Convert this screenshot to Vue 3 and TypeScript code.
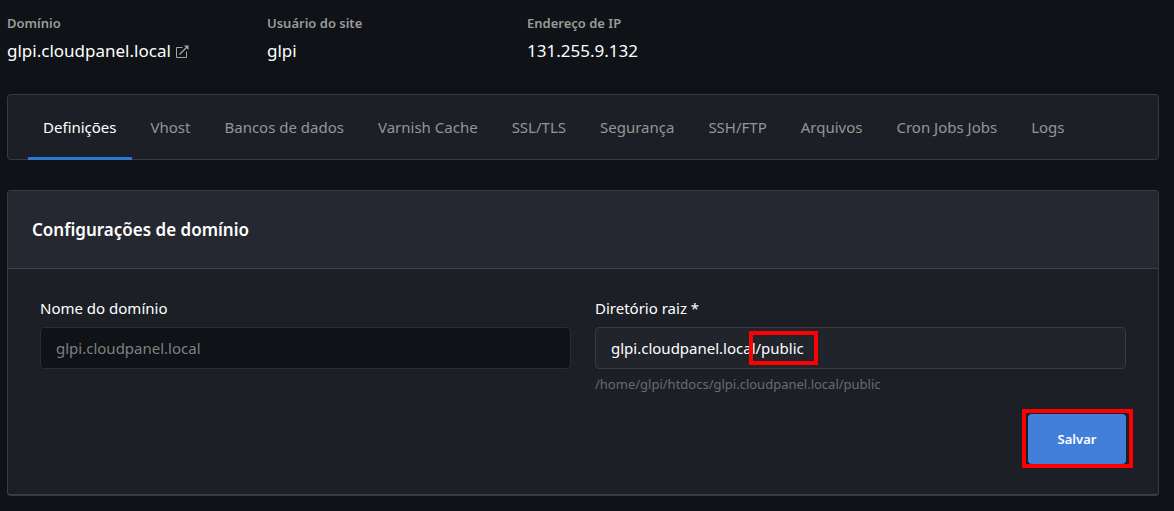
<script setup lang="ts">
import { ref } from 'vue'

interface Tab {
  label: string
  href: string
}

const tabs: Tab[] = [
  { label: 'Definições', href: '#settings' },
  { label: 'Vhost', href: '#vhost' },
  { label: 'Bancos de dados', href: '#databases' },
  { label: 'Varnish Cache', href: '#varnish-cache' },
  { label: 'SSL/TLS', href: '#ssl-tls' },
  { label: 'Segurança', href: '#security' },
  { label: 'SSH/FTP', href: '#ssh-ftp' },
  { label: 'Arquivos', href: '#files' },
  { label: 'Cron Jobs Jobs', href: '#cron-jobs' },
  { label: 'Logs', href: '#logs' },
]

const activeTab = ref('#settings')
const domainName = ref('glpi.cloudpanel.local')
const rootDirectory = ref('glpi.cloudpanel.local/public')
</script>

<template>
  <main class="page">
    <dl class="summary">
      <div class="summary-item">
        <dt>Domínio</dt>
        <dd>
          glpi.cloudpanel.local
          <a class="external" href="#open-site" aria-label="Abrir site">
            <svg viewBox="0 0 13 13" width="13" height="13" fill="none" stroke="currentColor" aria-hidden="true">
              <path d="M6.5 2.5h-6v10h10v-6" />
              <path d="M3.5 9.5l8-8" stroke-width="1.2" />
              <path d="M8 .5h4.500v4.500z" fill="currentColor" stroke="none" />
            </svg>
          </a>
        </dd>
      </div>
      <div class="summary-item">
        <dt>Usuário do site</dt>
        <dd>glpi</dd>
      </div>
      <div class="summary-item">
        <dt>Endereço de IP</dt>
        <dd>131.255.9.132</dd>
      </div>
    </dl>

    <nav class="tabs">
      <a
        v-for="tab in tabs"
        :key="tab.href"
        :href="tab.href"
        class="tab"
        :class="{ active: tab.href === activeTab }"
        @click="activeTab = tab.href"
      >{{ tab.label }}</a>
    </nav>

    <section class="card">
      <header class="card-header">
        <h2>Configurações de domínio</h2>
      </header>
      <form class="card-body" @submit.prevent>
        <div class="fields">
          <div class="field">
            <label for="domain-name">Nome do domínio</label>
            <input id="domain-name" v-model="domainName" type="text" disabled />
          </div>
          <div class="field">
            <label for="root-directory">Diretório raiz *</label>
            <div class="control">
              <input id="root-directory" v-model="rootDirectory" type="text" required />
              <span class="mark mark-path"></span>
            </div>
            <small>/home/glpi/htdocs/{{ rootDirectory }}</small>
          </div>
        </div>
        <div class="actions">
          <div class="control">
            <button type="submit">Salvar</button>
            <span class="mark mark-save"></span>
          </div>
        </div>
      </form>
    </section>
  </main>
</template>

<style>
body {
  margin: 0;
  background: #0f1216;
}
</style>

<style scoped>
.page {
  padding: 11px 15px 15px 7px;
  font-family: "Segoe UI", "Noto Sans", "Open Sans", sans-serif;
  font-size: 15px;
  line-height: 24px;
  color: #fff;
}

.page *,
.page *::before {
  box-sizing: border-box;
}

.summary {
  display: flex;
  margin: 0 0 27px;
}

.summary-item {
  width: 260px;
}

dt {
  font-size: 13px;
  font-weight: 600;
  line-height: 24px;
  color: #9b9b9b;
}

dd {
  display: flex;
  align-items: center;
  gap: 5px;
  margin: 0;
  font-size: 17px;
  line-height: 32px;
}

.external {
  padding-top: 1px;
  color: #a5a5a5;
}

.external svg {
  display: block;
}

.tabs {
  display: flex;
  gap: 4px;
  height: 66px;
  padding: 0 20px;
  border: 1px solid #383b44;
  border-radius: 4px;
  background: #1d1f27;
}

.tab {
  padding: 20px 15px 0;
  margin-bottom: -1px;
  border-bottom: 3px solid transparent;
  color: #959595;
  text-decoration: none;
  white-space: nowrap;
}

.tab.active {
  border-bottom-color: #2f77d6;
  color: #fff;
}

.card {
  margin-top: 30px;
  border: 1px solid #383b44;
  border-bottom-width: 2px;
  border-radius: 4px;
  background: #1d1f27;
}

.card-header {
  padding: 27px 24px 26px;
  border-bottom: 1px solid #3d4049;
  border-radius: 3px 3px 0 0;
  background: #252830;
}

h2 {
  margin: 0;
  font-size: 17px;
  font-weight: 600;
  line-height: 24px;
}

.card-body {
  padding: 27px 32px 30px;
}

.fields {
  display: grid;
  grid-template-columns: 1fr 1fr;
  gap: 24px;
}

.field {
  display: flex;
  flex-direction: column;
}

label {
  margin-bottom: 7px;
}

.control {
  position: relative;
}

input {
  display: block;
  width: 100%;
  height: 42px;
  padding: 0 15px;
  border: 1px solid #383b44;
  border-radius: 4px;
  background: #22242c;
  color: #fff;
  font: inherit;
}

input:disabled {
  border-color: #2a2d35;
  background: #0f1216;
  color: #808080;
}

small {
  margin-top: 4px;
  font-size: 13px;
  line-height: 22px;
  color: #686b71;
}

.actions {
  display: flex;
  justify-content: flex-end;
  margin-top: 19px;
}

button {
  display: block;
  width: 98px;
  height: 50px;
  padding: 0;
  border: 0;
  border-radius: 4px;
  background: #427fdb;
  color: #fff;
  font: inherit;
  font-size: 13px;
  font-weight: 600;
}

.mark {
  position: absolute;
  border: 4px solid #f00;
  pointer-events: none;
}

.mark-path {
  top: 4px;
  left: 154px;
  width: 69px;
  height: 34px;
}

.mark-save {
  top: -5px;
  left: -6px;
  width: 111px;
  height: 59px;
}
</style>
